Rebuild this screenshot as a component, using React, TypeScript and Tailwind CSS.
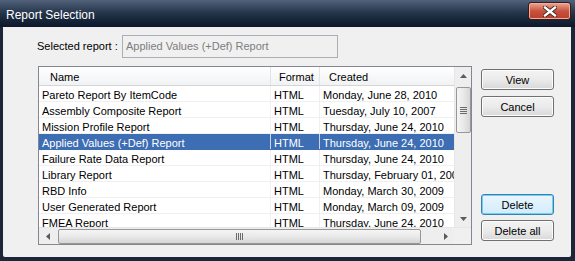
import React from 'react';

const rows = [
  ['Pareto Report By ItemCode', 'HTML', 'Monday, June 28, 2010'],
  ['Assembly Composite Report', 'HTML', 'Tuesday, July 10, 2007'],
  ['Mission Profile Report', 'HTML', 'Thursday, June 24, 2010'],
  ['Applied Values (+Def) Report', 'HTML', 'Thursday, June 24, 2010'],
  ['Failure Rate Data Report', 'HTML', 'Thursday, June 24, 2010'],
  ['Library Report', 'HTML', 'Thursday, February 01, 2007'],
  ['RBD Info', 'HTML', 'Monday, March 30, 2009'],
  ['User Generated Report', 'HTML', 'Monday, March 09, 2009'],
  ['FMEA Report', 'HTML', 'Thursday, June 24, 2010'],
];

const SELECTED = 3;

function Arrow({ dir }: { dir: 'up' | 'down' | 'left' | 'right' }) {
  const pts = {
    up: '0,4 3.5,0 7,4',
    down: '0,0 3.5,4 7,0',
    left: '4,0 0,3.5 4,7',
    right: '0,0 4,3.5 0,7',
  }[dir];
  const vertical = dir === 'up' || dir === 'down';
  return (
    <svg width={vertical ? 7 : 4} height={vertical ? 4 : 7} viewBox={vertical ? '0 0 7 4' : '0 0 4 7'}>
      <polygon points={pts} fill="#5a5a5a" />
    </svg>
  );
}

function Button({ label, focused }: { label: string; focused?: boolean }) {
  return (
    <div
      className={
        'w-[73px] h-[21px] rounded-[3px] border flex items-center justify-center text-black ' +
        (focused
          ? 'border-[#3c7fb1] bg-gradient-to-b from-[#eaf6fd] to-[#d2ecfa] shadow-[inset_0_0_0_1px_#6fd0f5]'
          : 'border-[#707070] bg-gradient-to-b from-[#f3f3f3] via-[#ebebeb] to-[#d8d8d8] shadow-[inset_0_0_0_1px_#fcfcfc]')
      }
    >
      <span className="leading-[12px]">{label}</span>
    </div>
  );
}

export default function App() {
  return (
    <div className="w-[575px] h-[261px] bg-[#1b2739] flex flex-col font-['Liberation_Sans',Arial,sans-serif] text-[11px] overflow-hidden">
      {/* title bar */}
      <div className="h-[27px] flex items-start bg-gradient-to-b from-[#52627a] via-[#233349] to-[#0c182b]">
        <span className="pl-[6px] pt-[8px] leading-[14px] text-[12px] text-white">Report Selection</span>
        <div className="ml-auto mr-[4px] mt-[2px] w-[43px] h-[18px] rounded-[3px] border border-[#3a1a17] bg-gradient-to-b from-[#e9a796] via-[#c9513d] to-[#b8402c] shadow-[inset_0_0_0_1px_#f0b0a0] flex items-center justify-center">
          <svg width="14" height="11" viewBox="0 0 14 11">
            <path d="M2 1.5 L12 9.5 M12 1.5 L2 9.5" stroke="#3b2a2a" strokeWidth="4.2" strokeLinecap="square" />
            <path d="M2 1.5 L12 9.5 M12 1.5 L2 9.5" stroke="#ffffff" strokeWidth="2.3" strokeLinecap="square" />
          </svg>
        </div>
      </div>

      {/* client area */}
      <div className="ml-[3px] mr-[4px] h-[230px] bg-[#f0f0f0] rounded-b-[2px] flex flex-col">
        <div className="flex items-center pt-[8px] pl-[34px]">
          <span className="w-[85px] text-black">Selected report :</span>
          <div className="w-[216px] h-[23px] border border-[#a9afb7] bg-[#f0f0f0] flex items-center pl-[3px] text-[#7d7d7d]">
            Applied Values (+Def) Report
          </div>
        </div>

        <div className="flex mt-[8px] pl-[35px]">
          {/* list view */}
          <div className="w-[434px] h-[179px] border border-[#828790] bg-white flex flex-col">
            <div className="flex h-[160px]">
              <div className="w-[415px] overflow-hidden">
                <div className="flex h-[19px] border-b border-[#d5d5d5] bg-gradient-to-b from-white to-[#f1f2f4] text-black">
                  <div className="w-[232px] pl-[11px] pt-[4px] leading-[12px] border-r border-[#e3e4e6]">Name</div>
                  <div className="w-[49px] pl-[8px] pt-[4px] leading-[12px] border-r border-[#e3e4e6]">Format</div>
                  <div className="w-[134px] pl-[9px] pt-[4px] leading-[12px]">Created</div>
                </div>
                {rows.map((r, i) => {
                  const sel = i === SELECTED;
                  return (
                    <div
                      key={i}
                      className={
                        'flex h-[16px] border-b whitespace-nowrap ' +
                        (sel ? 'bg-[#3d6db3] text-white border-[#3d6db3]' : 'text-black border-[#f0f0f0]')
                      }
                    >
                      <div className={'w-[232px] pl-[3px] pt-[3px] leading-[12px] overflow-hidden border-r ' + (sel ? 'border-[#c9d6ea]' : 'border-[#f0f0f0]')}>{r[0]}</div>
                      <div className={'w-[49px] pl-[3px] pt-[3px] leading-[12px] overflow-hidden border-r ' + (sel ? 'border-[#c9d6ea]' : 'border-[#f0f0f0]')}>{r[1]}</div>
                      <div className="w-[134px] pl-[3px] pt-[3px] leading-[12px] overflow-hidden">{r[2]}</div>
                    </div>
                  );
                })}
              </div>
              {/* vertical scrollbar */}
              <div className="w-[17px] h-[160px] bg-[#eeeeee] border-l border-[#e6e6e6] flex flex-col items-center">
                <div className="h-[17px] w-full flex items-center justify-center">
                  <Arrow dir="up" />
                </div>
                <div className="mt-[3px] w-[15px] h-[46px] rounded-[2px] border border-[#979797] bg-gradient-to-r from-[#f5f5f5] via-[#e9e9e9] to-[#d6d6d6] flex flex-col items-center justify-center gap-[1px]">
                  <div className="w-[7px] h-[1px] bg-[#6b6b6b]" />
                  <div className="w-[7px] h-[1px] bg-[#6b6b6b]" />
                  <div className="w-[7px] h-[1px] bg-[#6b6b6b]" />
                  <div className="w-[7px] h-[1px] bg-[#6b6b6b]" />
                </div>
                <div className="flex-1" />
                <div className="h-[17px] w-full flex items-center justify-center">
                  <Arrow dir="down" />
                </div>
              </div>
            </div>
            {/* horizontal scrollbar */}
            <div className="flex h-[17px] bg-[#eeeeee] border-t border-[#e6e6e6] items-center">
              <div className="w-[17px] h-full flex items-center justify-center">
                <Arrow dir="left" />
              </div>
              <div className="ml-[2px] w-[363px] h-[15px] rounded-[2px] border border-[#979797] bg-gradient-to-b from-[#f5f5f5] via-[#e9e9e9] to-[#d6d6d6] flex items-center justify-center gap-[1px]">
                <div className="w-[1px] h-[7px] bg-[#6b6b6b]" />
                <div className="w-[1px] h-[7px] bg-[#6b6b6b]" />
                <div className="w-[1px] h-[7px] bg-[#6b6b6b]" />
                <div className="w-[1px] h-[7px] bg-[#6b6b6b]" />
              </div>
              <div className="flex-1" />
              <div className="w-[17px] h-full flex items-center justify-center">
                <Arrow dir="right" />
              </div>
              <div className="w-[17px] h-full bg-[#f0f0f0]" />
            </div>
          </div>

          {/* buttons */}
          <div className="ml-[9px] pt-[3px] flex flex-col">
            <Button label="View" />
            <div className="mt-[6px]">
              <Button label="Cancel" />
            </div>
            <div className="mt-[77px]">
              <Button label="Delete" focused />
            </div>
            <div className="mt-[5px]">
              <Button label="Delete all" />
            </div>
          </div>
        </div>
      </div>
    </div>
  );
}
